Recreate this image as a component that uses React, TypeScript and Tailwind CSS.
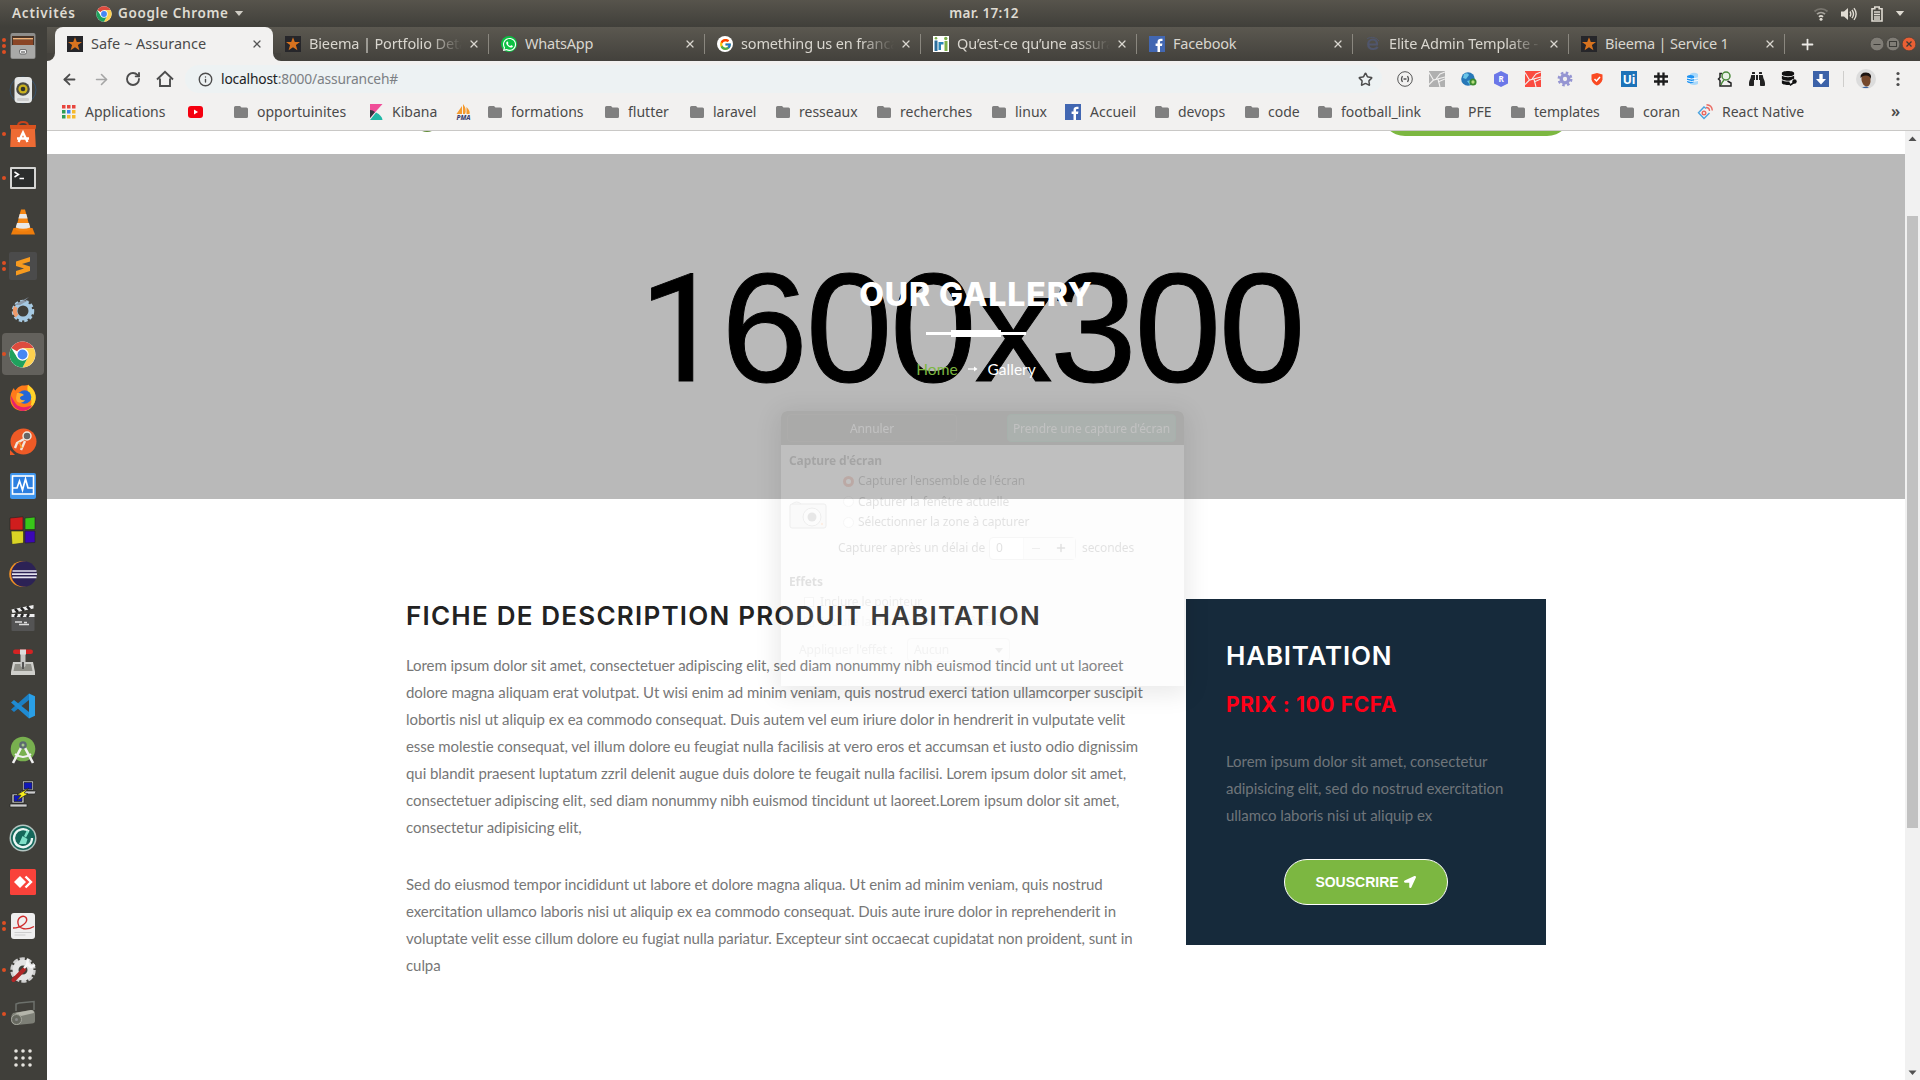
import React from "react";
import { FcGoogle } from "react-icons/fc";
import { FaWhatsapp, FaLocationArrow, FaDatabase, FaBinoculars } from "react-icons/fa";
import { ArrowLeft, ArrowRight, RotateCw, Info, Star, Plus, X } from "lucide-react";

/* ---------- Shared glyphs ---------- */

const ChromeLogo = ({ className }: { className: string }) => (
  <svg viewBox="0 0 48 48" className={className}>
    <circle cx="24" cy="24" r="23" fill="#fff" />
    <path d="M24 24 4.1 12.5A23 23 0 0 1 43.9 12.5L44 13H24z" fill="#dd4b3e" />
    <path d="M24 13h19.9A23 23 0 0 1 24 47l9.6-17.5z" fill="#fdd04f" />
    <path d="M4.1 12.5A23 23 0 0 0 24 47l9.5-17.5H14.5z" fill="#1fa15d" />
    <circle cx="24" cy="24" r="11" fill="#fff" />
    <circle cx="24" cy="24" r="8.8" fill="#4687f4" />
  </svg>
);

const StarFav = () => (
  <svg viewBox="0 0 16 16" className="size-4">
    <rect width="16" height="16" fill="#26262a" />
    <path d="M8 1.2 9.8 6H15l-4.1 3.1 1.5 5.2L8 11.2l-4.4 3.1 1.5-5.2L1 6h5.2z" fill="#d8731f" />
  </svg>
);

const FacebookFav = () => (
  <svg viewBox="0 0 16 16" className="size-4">
    <rect width="16" height="16" fill="#4267b2" />
    <path d="M11 16V10h2l.4-2.4H11V6.2c0-.8.3-1.2 1.3-1.2h1.2V2.8c-3-.5-5 .3-5 3.1v1.7H6.6V10h1.9v6z" fill="#fff" />
  </svg>
);

const WhatsAppFav = () => (
  <span className="flex size-4 items-center justify-center rounded-full bg-[#0cc143] text-white">
    <FaWhatsapp className="size-[15px]" />
  </span>
);

const GoogleFav = () => (
  <span className="flex size-4 items-center justify-center rounded-full bg-white">
    <FcGoogle className="size-[13px]" />
  </span>
);

const HFav = () => (
  <svg viewBox="0 0 16 16" className="size-4">
    <rect width="16" height="16" fill="#fff" />
    <path d="M1.500 4.500h3V15h-3z" fill="#2d6e9c" />
    <path d="M5.500 14V6h5v2.500H8V14z" fill="#2b86b8" />
    <path d="M11.500 5h3v10h-3z" fill="#7cb04a" />
    <circle cx="3" cy="2.300" r="1.300" fill="#7cb04a" />
    <circle cx="12.800" cy="2.500" r="1.700" fill="#7cb04a" />
  </svg>
);

const EliteFav = () => (
  <svg viewBox="0 0 16 16" className="size-4" fill="none" stroke="#50566c" strokeWidth="2.200">
    <path d="M4 8.500h8c.3-3-1.500-5-4-5-3 0-4.800 2.200-4.800 4.800 0 3 2.200 4.700 5 4.700 2 0 3.500-.8 4.500-2" />
    <path d="M2 3c2-2 8-3 12 2" strokeWidth="1" />
  </svg>
);

const Folder = () => (
  <svg viewBox="0 0 14 12" className="h-3 w-3.5">
    <path d="M0 1.500Q0 0 1.500 0H6l1.500 1.500h5Q14 1.500 14 3v7.500q0 1.500-1.500 1.500h-11Q0 12 0 10.500z" fill="#808080" />
  </svg>
);

/* ---------- Top system bar ---------- */

const SystemBar = () => (
  <header className="grid h-[27px] shrink-0 grid-cols-3 items-center bg-linear-to-b from-[#57544c] to-[#403f3a] text-[13.500px] font-semibold text-[#dfdbd2]">
    <div className="flex items-center pl-3">
      <span className="w-[84px] tracking-[0.800px]">Activités</span>
      <ChromeLogo className="mr-1.5 size-4" />
      <span className="tracking-[0.650px]">Google Chrome</span>
      <svg viewBox="0 0 10 6" className="ml-[5px] h-[5px] w-2.5">
        <path d="M0 0h10L5 6z" fill="#cfccc4" />
      </svg>
    </div>
    <div className="pl-12 text-center">
      <span className="tracking-[0.300px]">mar. 17:12</span>
    </div>
    <div className="flex items-center justify-end pr-[15px]">
      <svg viewBox="0 0 16 14" className="mr-3 h-3.5 w-4" fill="none" strokeWidth="1.800">
        <path d="M1.500 4.500a9.500 9.500 0 0 1 13 0" stroke="#77746d" />
        <path d="M4 7.200a6 6 0 0 1 8 0" stroke="#a5a29b" />
        <path d="M6 9.800a3 3 0 0 1 4 0" stroke="#dfdbd2" />
        <circle cx="8" cy="12.300" r="1.500" fill="#dfdbd2" />
      </svg>
      <svg viewBox="0 0 16 14" className="mr-3.5 h-3.5 w-4" fill="none" stroke="#dfdbd2" strokeWidth="1.400">
        <path d="M0 4.500h3L7 1v12L3 9.500H0z" fill="#dfdbd2" stroke="none" />
        <path d="M9 4.500q1.600 2.500 0 5M11 2.800q3 4.200 0 8.400M13 1.200q4.300 5.800 0 11.600" />
      </svg>
      <svg viewBox="0 0 12 16" className="mr-3 h-4 w-3" fill="none" stroke="#dfdbd2">
        <path d="M1 2.800h2.800V1h4.400v1.800H11V15H1z" strokeWidth="1.600" />
        <path d="M3 6h6M3 8.500h6M3 11h6M3 13h6" strokeWidth="1.300" />
      </svg>
      <svg viewBox="0 0 10 6" className="h-[5px] w-2.5">
        <path d="M0 0h10L5 6z" fill="#dfdbd2" />
      </svg>
    </div>
  </header>
);

/* ---------- Dock ---------- */

type DockItem = { name: string; dots: number; active?: boolean; art: React.ReactNode };

const dockItems: DockItem[] = [
  {
    name: "files", dots: 3, art: (
      <g>
        <rect x="1.500" y="1" width="25" height="26" rx="2" fill="#8e8e8c" />
        <path d="M3 4h22v9H3z" fill="#4a3426" />
        <path d="M4 6h20v1.500H4z" fill="#f0b27a" /><path d="M4 8h20v5H4z" fill="#8a4526" />
        <rect x="2" y="13" width="24" height="13" rx="1.500" fill="#a9a9a7" />
        <rect x="10.500" y="17.500" width="7" height="4.500" rx="1.500" fill="#eee" stroke="#555" strokeWidth=".8" />
        <path d="M12 20h4" stroke="#444" />
      </g>
    ),
  },
  {
    name: "music", dots: 0, art: (
      <g>
        <circle cx="14" cy="14" r="13" fill="none" stroke="#35506b" strokeWidth="1" />
        <rect x="5.500" y="1" width="17.500" height="26" rx="4" fill="#e4e6e6" />
        <circle cx="14" cy="13" r="6.800" fill="#4a4b45" />
        <circle cx="14" cy="13" r="4.600" fill="#c9b11e" />
        <circle cx="14" cy="13" r="2.300" fill="#32342c" />
        <rect x="8" y="22" width="12" height="3" rx="1" fill="#ccc" />
      </g>
    ),
  },
  {
    name: "software", dots: 1, art: (
      <g>
        <path d="M9 6q0-4 5-4t5 4" fill="none" stroke="#c8431b" strokeWidth="2" />
        <path d="M1 5h26l-1 5 .8 17H1.200L2 10z" fill="#ee6b34" />
        <path d="M1 5h26l-.6 4H1.600z" fill="#d9531f" />
        <path d="m9.500 22 4.500-9.500 4.500 9.500M8 18.500h12" fill="none" stroke="#fff" strokeWidth="2.300" />
      </g>
    ),
  },
  {
    name: "terminal", dots: 1, art: (
      <g>
        <rect x="1" y="3" width="26" height="22" rx="1" fill="#d5d5d3" />
        <rect x="3" y="5" width="22" height="18" fill="#2b2d2c" />
        <path d="m5.500 8 4 2.500-4 2.500M10.500 14.500h4.500" fill="none" stroke="#fff" strokeWidth="1.500" />
      </g>
    ),
  },
  {
    name: "vlc", dots: 0, art: (
      <g>
        <path d="M4.500 20h19l2.500 6.500H2z" fill="#ee7d0c" />
        <path d="M12 1.500h4L21.500 22q-7.500 3-15 0z" fill="#f58613" />
        <path d="M10.700 6h6.600l1.300 4.500H9.400zM8 15h12l1.300 4.500q-7.300 2.500-14.600 0z" fill="#e8e8e8" />
      </g>
    ),
  },
  {
    name: "sublime", dots: 2, art: (
      <g>
        <rect x="0" y="0" width="28" height="28" rx="2" fill="#4b4b4b" />
        <path d="m7 9.500 14-4.500v4.500l-8 2.500 8 2.500v4.500L7 23.500V19l8-2.500-8-2.500z" fill="#f79a1f" />
      </g>
    ),
  },
  {
    name: "builder", dots: 0, art: (
      <g fill="none">
        <circle cx="14" cy="15" r="10" stroke="#a9cbe2" strokeWidth="2.500" strokeDasharray="3.300 2.200" />
        <circle cx="14" cy="15" r="7.500" stroke="#a5c9e3" strokeWidth="4" />
        <path d="M8 20a7.500 7.500 0 0 1-1-9" stroke="#ee9a6a" strokeWidth="4" />
        <path d="M5 9 20 1l-5 4 5-1-9 5" fill="#8d9bab" />
      </g>
    ),
  },
  { name: "chrome", dots: 1, active: true, art: null },
  {
    name: "firefox", dots: 0, art: (
      <g>
        <path d="M14 1.500c3 0 5-1 6-.8 0 2 4 3 5.500 7C29 18 23 27 14 27S0 20 1.500 12C2 8 4 5 5 4c0 1 .5 2 1.500 2.500C8 4 11 1.500 14 1.500" fill="#ff7a1a" />
        <path d="M19 1c5 3 9 9 7.500 15S20 26.500 14 27c7-2 9.500-7 8-12S17 7 19 1" fill="#ffd42a" />
        <path d="M2 12c0 8 4 14 12 15 5-.5 8-3 9-6-5 3-13 3-16-1S3 13 2 12" fill="#e6226c" />
        <circle cx="15.500" cy="13" r="6.800" fill="#2467d6" />
        <path d="M8 9c2 0 5 0 7 2-2 1-4 1.500-4 3s2 3 5 2c-2 4-9 4-9-2z" fill="#ffae2e" />
      </g>
    ),
  },
  {
    name: "postman", dots: 0, art: (
      <g>
        <circle cx="14.500" cy="13.500" r="13" fill="#ee5a26" /><path d="M1 27v-5l5 5z" fill="#ee5a26" />
        <circle cx="18" cy="8" r="4" fill="#666" stroke="#f2e6dc" strokeWidth="1.500" />
        <path d="M15 11 8 15l-2 5M16 13l-4 9" stroke="#f2e6dc" strokeWidth="2.400" fill="none" />
        <path d="m10 14 3 6" stroke="#f8a433" strokeWidth="1.500" />
      </g>
    ),
  },
  {
    name: "monitor", dots: 0, art: (
      <g>
        <rect x="1" y="1" width="26" height="26" rx="2" fill="#3f96ee" />
        <rect x="3.500" y="4" width="21" height="18" fill="#2c7fe0" stroke="#fff" strokeWidth="1.600" />
        <path d="M4 16h4l2.500-7 3 9 3-11 2.500 9h5" fill="none" stroke="#fff" strokeWidth="1.700" />
      </g>
    ),
  },
  {
    name: "blocks", dots: 0, art: (
      <g stroke="#24241f" strokeWidth=".6">
        <path d="M1 2 14 .8V14H1z" fill="#d01d1d" /><path d="m16 2 10-1v12.500H16z" fill="#38c619" />
        <path d="M2 15h12.500v12L3 28.500z" fill="#d9d425" /><path d="M16 15h10v11.500l-10 .5z" fill="#3b07b5" />
      </g>
    ),
  },
  {
    name: "eclipse", dots: 0, art: (
      <g>
        <circle cx="13" cy="14" r="12.800" fill="#f29124" /><circle cx="15" cy="14" r="12.800" fill="#2c2255" />
        <path d="M3.500 11h24M3 14.200h25M3.500 17.400h24" stroke="#e4e2ef" strokeWidth="1.700" />
      </g>
    ),
  },
  {
    name: "video", dots: 0, art: (
      <g>
        <rect x="2.500" y="11" width="23" height="16" rx="1" fill="#545454" />
        <path d="M2.500 5.500 24.500 1v3.600L3.500 9z" fill="#eee" /><path d="M2.500 10h23v3h-23z" fill="#eee" />
        <path d="m6 4.800 3 3.400M12 3.500l3 3.400M18 2.300l3 3.400" stroke="#222" strokeWidth="2.500" />
        <path d="m8 10-2 3M14 10l-2 3M20 10l-2 3" stroke="#222" strokeWidth="2.500" />
        <path d="M6 18h7M10 20.500h10M15 18.500h3" stroke="#ddd" strokeWidth="1.300" />
      </g>
    ),
  },
  {
    name: "switch", dots: 0, art: (
      <g>
        <path d="M4 14h20l2 10v3H2v-3z" fill="#cfcfcb" /><path d="M6 16h16l1.500 7h-19z" fill="#8f8f88" />
        <path d="M11.500 4h5v14q-2.500 3-5 0z" fill="#c5c6c4" /><path d="M13 14h2v7h-2z" fill="#555" />
        <rect x="4" y="1.500" width="20" height="4.500" rx="2.200" fill="#d42323" /><rect x="11" y="1.500" width="6" height="5" fill="#ddd" />
      </g>
    ),
  },
  {
    name: "vscode", dots: 0, art: (
      <g>
        <path d="m20 1.500 6 2.800v19.400l-6 2.800z" fill="#2a9fe6" />
        <path d="M20 8 5 20l-3-2.500L20 1.500z" fill="#1b7fc4" /><path d="M20 20 5 8l-3 2.500 18 16z" fill="#1f8bd3" />
      </g>
    ),
  },
  {
    name: "android-studio", dots: 0, art: (
      <g>
        <circle cx="14" cy="13" r="12.300" fill="#78b04f" />
        <path d="M13 10 4 27M15 10l9 17" stroke="#f1f1f1" strokeWidth="2.600" />
        <path d="M6 18q8 6 16 0" stroke="#f1f1f1" strokeWidth="2" fill="none" />
        <circle cx="14" cy="9" r="3.800" fill="#5c6a70" /><circle cx="14" cy="9" r="1.500" fill="#a5c88a" />
      </g>
    ),
  },
  {
    name: "putty", dots: 0, art: (
      <g stroke="#222" strokeWidth=".7">
        <path d="M13.500 1h11v9h-11zM12 11h15l-1 3H12z" fill="#ccc" /><path d="M15 2.500h8V9h-8z" fill="#1017b8" />
        <path d="M3 14h12v9H3zM1 24h17v3H1z" fill="#ccc" /><path d="M5 15.500h8v6H5z" fill="#1017b8" />
        <path d="m20 8-12 6.500 4 .8-4 5 11-6.500-4-1z" fill="#f7ee1b" />
      </g>
    ),
  },
  {
    name: "cleaner", dots: 0, art: (
      <g>
        <circle cx="14" cy="14" r="13.500" fill="#b4c6c2" /><circle cx="14" cy="14" r="12" fill="#15685b" />
        <path d="M20 7.500A9 9 0 1 0 23 14" fill="none" stroke="#eaf6f3" strokeWidth="2.300" />
        <path d="m18 6-3 6 2 1.500L20 8zM13.500 12l5 3-1.500 5h-7z" fill="#7fe0c8" />
      </g>
    ),
  },
  {
    name: "anydesk", dots: 0, art: (
      <g>
        <rect x="1" y="1" width="26" height="26" rx="1.500" fill="#f9423a" />
        <path d="m11 8 6 6-6 6-6-6z" fill="#fff" /><path d="m16.500 8.500 5.500 5.500-5.500 5.500" fill="none" stroke="#fff" strokeWidth="2.400" />
      </g>
    ),
  },
  {
    name: "document-viewer", dots: 2, art: (
      <g>
        <rect x="2" y="1" width="24" height="26" rx="3" fill="#efefef" />
        <path d="M4 16C12 16 20 10 17 5.500c-3-3-9 0-8 6s9 7 16 3" fill="none" stroke="#cf2b2b" strokeWidth="1.400" />
        <path d="M5.500 20.500h17M5.500 23h11" stroke="#cdcdcd" />
      </g>
    ),
  },
  {
    name: "settings", dots: 1, art: (
      <g>
        <circle cx="14" cy="14" r="11" fill="none" stroke="#cfcfcf" strokeWidth="3.500" strokeDasharray="5 1.900" />
        <circle cx="14" cy="14" r="7.500" fill="none" stroke="#e3e3e3" strokeWidth="6" />
        <path d="M4.500 24 15 13.500" stroke="#b02626" strokeWidth="4" strokeLinecap="round" />
        <path d="m15 12 5-5M19 3l-1 5 4 3 4-2" stroke="#f7f7f7" strokeWidth="2.400" fill="none" />
      </g>
    ),
  },
  {
    name: "scanner", dots: 1, art: (
      <g>
        <path d="M7 11V4L10 3l15-1.500V10" fill="none" stroke="#6d716c" strokeWidth="1.500" />
        <path d="M4 13 22 10q4 0 4 4v7q0 2-3 2.500L8 25q-6 0-6-6 0-4 2-6" fill="#7d7f76" />
        <path d="M6 13 22 10q3 0 3 3l-13 3z" fill="#b4b5ab" />
        <circle cx="7.500" cy="19.500" r="5" fill="#66685f" stroke="#a5a69c" /><circle cx="7.500" cy="19.500" r="1.500" fill="#888" />
      </g>
    ),
  },
  {
    name: "apps", dots: 0, art: (
      <g fill="#e6e4df">
        {[7, 14, 21].map((y) => [7, 14, 21].map((x) => <circle key={`${x}-${y}`} cx={x} cy={y} r="1.800" />))}
      </g>
    ),
  },
];

const Dock = () => (
  <nav className="-mt-[3px] flex w-[47px] shrink-0 flex-col">
    {dockItems.map((d) => (
      <div key={d.name} className="flex h-11 shrink-0 items-center">
        <div className={d.active ? "ml-0.5 flex h-[42px] w-[42px] items-center rounded bg-[#63615c]" : "ml-0.5 flex h-[42px] w-[42px] items-center"}>
          <div className="flex w-[7px] flex-col items-start gap-0.5">
            {Array.from({ length: d.dots }, (_, i) => (
              <span key={i} className="size-1 rounded-full bg-[#dd4f23]" />
            ))}
          </div>
          {d.active ? (
            <ChromeLogo className="size-[27px]" />
          ) : (
            <svg viewBox="0 0 28 28" className="size-7">{d.art}</svg>
          )}
        </div>
      </div>
    ))}
  </nav>
);

/* ---------- Tabs ---------- */

const tabs: { title: string; icon: React.ReactNode; fade?: boolean }[] = [
  { title: "Bieema | Portfolio Details", icon: <StarFav />, fade: true },
  { title: "WhatsApp", icon: <WhatsAppFav /> },
  { title: "something us en francais", icon: <GoogleFav />, fade: true },
  { title: "Qu’est-ce qu’une assurance", icon: <HFav />, fade: true },
  { title: "Facebook", icon: <FacebookFav /> },
  { title: "Elite Admin Template - The", icon: <EliteFav />, fade: true },
  { title: "Bieema | Service 1", icon: <StarFav /> },
];

const TabStrip = () => (
  <div className="flex h-[34px] shrink-0 items-end bg-linear-to-b from-[#5b5850] to-[#43413c] text-[14.500px] text-[#d9d6cf]">
    <div className="h-2 w-2 bg-[#f2f1f0]">
      <div className="h-2 w-2 rounded-br-lg bg-[#44423d]" />
    </div>
    <div className="flex h-[34px] w-[218px] items-center rounded-t-lg bg-[#f2f1f0] pl-3 text-[#4a4a4a]">
      <StarFav />
      <span className="ml-2 w-[160px] pb-px whitespace-nowrap">Safe ~ Assurance</span>
      <X className="size-3 text-[#555]" strokeWidth={2.5} />
    </div>
    <div className="h-2 w-2 bg-[#f2f1f0]">
      <div className="h-2 w-2 rounded-bl-lg bg-[#44423d]" />
    </div>
    <div className="-ml-2 flex h-[34px]">
      {tabs.map((t, i) => (
        <div key={i} className="flex w-[216px] items-center pl-3">
          {t.icon}
          <span
            className={
              t.fade
                ? "ml-2 w-[153px] overflow-hidden pb-px whitespace-nowrap tracking-[-0.150px] [mask-image:linear-gradient(to_right,black_78%,transparent)]"
                : "ml-2 w-[153px] overflow-hidden pb-px whitespace-nowrap tracking-[-0.200px]"
            }
          >
            {t.title}
          </span>
          <X className="ml-1.5 size-3" strokeWidth={2.500} />
          <span className="ml-auto h-5 w-px bg-[#8a877f]" />
        </div>
      ))}
    </div>
    <div className="flex h-[34px] flex-1 items-center">
      <Plus className="ml-3.5 size-[17px] text-[#eceae6]" strokeWidth={2.500} />
      <div className="ml-auto flex items-center pr-[3px]">
        <WindowButton kind="min" />
        <WindowButton kind="max" />
        <WindowButton kind="close" />
      </div>
    </div>
  </div>
);

const WindowButton = ({ kind }: { kind: "min" | "max" | "close" }) => (
  <svg viewBox="0 0 16 16" className="size-4">
    <circle cx="8" cy="8" r="6.800" fill={kind === "close" ? "#ea5f34" : "#807d76"} stroke="#3c3b37" strokeWidth=".5" />
    {kind === "min" && <path d="M4.500 8.500h7" stroke="#3c3b37" />}
    {kind === "max" && <rect x="4.500" y="5.500" width="7" height="5" fill="none" stroke="#3c3b37" />}
    {kind === "close" && <path d="m5.500 5.500 5 5m0-5-5 5" stroke="#3c3b37" strokeWidth="1.300" />}
  </svg>
);

/* ---------- Address bar ---------- */

const extensions: React.ReactNode[] = [
  <g fill="none" stroke="#555">
    <circle cx="8" cy="8" r="7.300" /><path d="M5.500 5Q3.500 8 5.500 11M10.500 5q2 3 0 6M6.500 8h3" strokeWidth="1.300" />
  </g>,
  <g><rect width="16" height="16" fill="#b0b0b0" /><path d="M0 1.500 4.500 9 16 6M4.500 9 0 13.500M9 8l2 8M7 8l4-5 5-2M9 11l7-3" fill="none" stroke="#f2f1f0" strokeWidth="1.100" /></g>,
  <g><circle cx="7" cy="8" r="6.800" fill="#2778b8" /><path d="M3 3q4-2 5 1L5 8 2 7zM6 10l4-1-1 5z" fill="#6ac4e8" /><circle cx="12" cy="11" r="2.600" fill="#b6dc7e" stroke="#3c8a2f" strokeWidth="1.900" /></g>,
  <g><path d="m8 0 7 3.500v9L8 16l-7-3.500v-9z" fill="#6b77e8" /><text x="8" y="11" fontSize="8" fontWeight="700" textAnchor="middle" fill="#fff">R</text></g>,
  <g><rect width="16" height="16" fill="#fb4b40" /><path d="M0 1.500 4.500 9 16 6M4.500 9 0 13.500M9 8l2 8M7 8l4-5 5-2M9 11l7-3" fill="none" stroke="#f2f1f0" strokeWidth="1.100" /></g>,
  <g fill="none" stroke="#9595d2"><circle cx="8" cy="8" r="3.800" strokeWidth="3.300" /><circle cx="8" cy="8" r="6.200" strokeWidth="2.500" strokeDasharray="2.500 2.370" /></g>,
  <g><path d="M2.500 3.500 8 2l5.500 1.500v5Q12.500 12.500 8 14.500 3.500 12.500 2.500 8.500z" fill="#fa4a22" /><path d="m5.500 8 2 2 3.500-4" fill="none" stroke="#fff" strokeWidth="1.500" /></g>,
  <g><rect width="16" height="16" fill="#1d72b8" /><text x="8" y="12.500" fontSize="12" fontWeight="700" textAnchor="middle" fill="#fff">Ui</text></g>,
  <path d="M5.500 1.500v13M10.500 1.500v13M1 5.500h14M1 10.500h14" stroke="#1c1c1c" strokeWidth="2.300" fill="none" />,
  <g><path d="M5 3q4-2.500 8 0v10q-4 2-8 0z" fill="#a9d8fa" /><path d="M2 5q3.500-2 7 0v6q-3.500 2.500-7 0z" fill="#1f93f2" /><path d="M2 7q3.500 2 11 0M2 9.500q3.500 2 11 0" stroke="#fff" fill="none" /></g>,
  <g fill="none" stroke="#222" strokeWidth="1.500"><path d="M5 2.500H3v4L1.500 8 3 9.500V15h11v-3l-3.500-2" /><circle cx="9" cy="5" r="4" stroke="#4b8a3c" fill="#e8f1e6" /><path d="M7 9q-2 2-3 5" stroke="#4b8a3c" /></g>,
  <FaBinoculars size={16} color="#222" />,
  <g><FaDatabase size={14} color="#111" /><path d="m9 12 4-3" stroke="#f2f1f0" strokeWidth="3" /><circle cx="13.500" cy="10.500" r="2.200" fill="#111" /><path d="m13 11-4 3.500" stroke="#111" strokeWidth="1.600" /></g>,
  <g><rect width="16" height="16" fill="#3c62a8" /><path d="M6.300 3h3.400v5H13l-5 5.500L3 8h3.300z" fill="#fff" /></g>,
];

const AddressBar = () => (
  <div className="flex h-9 shrink-0 items-center pl-3.5 text-[#4d4d4d]">
    <div className="flex w-[124px] items-center gap-[15px]">
      <ArrowLeft className="size-[17px]" strokeWidth={2.600} />
      <ArrowRight className="size-[17px] text-[#a5a5a5]" strokeWidth={2.300} />
      <RotateCw className="size-[16px]" strokeWidth={2.800} />
      <svg viewBox="0 0 18 18" className="size-[18px]" fill="none" stroke="#4d4d4d" strokeWidth="1.900">
        <path d="M1 9.500 9 1.800l8 7.700M4 8.500V16h10V8.500" />
      </svg>
    </div>
    <div className="flex h-7 w-[1197px] items-center rounded-full bg-[#edf2f3] pl-[13px]">
      <Info className="size-[15px]" strokeWidth={2.200} />
      <span className="ml-2 text-[13.800px] tracking-[-0.180px] text-[#7c8084]">
        <span className="text-[#202124]">localhost</span>:8000/assuranceh#
      </span>
      <Star className="mr-[9px] ml-auto size-[15px]" strokeWidth={2.400} />
    </div>
    <div className="ml-[15px] flex gap-4">
      {extensions.map((e, i) => (
        <svg key={i} viewBox="0 0 16 16" className="size-4">{e}</svg>
      ))}
    </div>
    <span className="ml-3.5 h-4 w-px bg-[#cfcecc]" />
    <svg viewBox="0 0 20 20" className="ml-3 size-5">
      <circle cx="10" cy="10" r="10" fill="#dcdcdc" />
      <path d="M6 19q4-3 7 0z" fill="#3a62a0" />
      <path d="M5.500 8q0-4 4.500-4t4.500 4v5q-1 4.500-4 4.500-4-1-5-6.500z" fill="#75482c" />
      <path d="M4.500 9Q4 3.500 10 3.500T15 10q-1-3.500-5-3.500T4.500 9" fill="#1d1512" />
    </svg>
    <svg viewBox="0 0 4 16" className="ml-5 h-4 w-1" fill="#4d4d4d">
      <circle cx="2" cy="2.500" r="1.600" /><circle cx="2" cy="8" r="1.600" /><circle cx="2" cy="13.500" r="1.600" />
    </svg>
  </div>
);

/* ---------- Bookmarks ---------- */

const AppsGrid = () => (
  <svg viewBox="0 0 14 14" className="size-3.5">
    {["#e8453c", "#e8453c", "#e8453c", "#2f9e54", "#3b82f0", "#f5b92c", "#2f9e54", "#f5b92c", "#f5b92c"].map((c, i) => (
      <rect key={i} x={(i % 3) * 5} y={Math.floor(i / 3) * 5} width="3.500" height="3.500" fill={c} />
    ))}
  </svg>
);

const Youtube = () => (
  <svg viewBox="0 0 15 12" className="h-3 w-[15px]">
    <rect width="15" height="12" rx="3" fill="#f5000f" /><path d="m6 3.500 4 2.500-4 2.500z" fill="#fff" />
  </svg>
);

const Kibana = () => (
  <svg viewBox="0 0 14 16" className="h-4 w-3.5">
    <path d="M1 0h12.500L1 14z" fill="#f04e98" /><path d="M1 6q3 0 5 2L1 14z" fill="#343741" /><path d="M7 8.500q6 3 6.500 7.500H1z" fill="#20b8a6" />
  </svg>
);

const Pma = () => (
  <svg viewBox="0 0 17 16" className="h-4 w-[17px]">
    <path d="M7 10V2L1.500 10zM8 10V0q4 5 2 10zM11.500 10V3q4 4 3 7z" fill="#f59a2d" />
    <text x="8.500" y="15.500" fontSize="6.500" fontWeight="800" fontStyle="italic" textAnchor="middle" fill="#3c3f6e">PMA</text>
  </svg>
);

const ReactNativeMark = () => (
  <svg viewBox="0 0 16 16" className="size-4" fill="none" strokeWidth="1.400">
    <path d="M9 4.500 7 3 1.500 8.800 7 14.500l5.500-5.500" stroke="#4aa3df" />
    <circle cx="7" cy="9" r="1.800" stroke="#ea6a62" /><path d="M9 3.500q3.500 0 3.500 3.500M9.500.8Q15 1 15.300 6.500" stroke="#ea6a62" />
  </svg>
);

const bookmarks: { icon: React.ReactNode; label?: string; box: string }[] = [
  { icon: <AppsGrid />, label: "Applications", box: "w-[126px]" },
  { icon: <Youtube />, box: "w-[46px]" },
  { icon: <Folder />, label: "opportuinites", box: "w-[135px]" },
  { icon: <Kibana />, label: "Kibana", box: "w-[86px]" },
  { icon: <Pma />, box: "w-[33px]" },
  { icon: <Folder />, label: "formations", box: "w-[117px]" },
  { icon: <Folder />, label: "flutter", box: "w-[85px]" },
  { icon: <Folder />, label: "laravel", box: "w-[86px]" },
  { icon: <Folder />, label: "resseaux", box: "w-[101px]" },
  { icon: <Folder />, label: "recherches", box: "w-[115px]" },
  { icon: <Folder />, label: "linux", box: "w-[73px]" },
  { icon: <FacebookFav />, label: "Accueil", box: "w-[90px]" },
  { icon: <Folder />, label: "devops", box: "w-[90px]" },
  { icon: <Folder />, label: "code", box: "w-[73px]" },
  { icon: <Folder />, label: "football_link", box: "w-[127px]" },
  { icon: <Folder />, label: "PFE", box: "w-[66px]" },
  { icon: <Folder />, label: "templates", box: "w-[109px]" },
  { icon: <Folder />, label: "coran", box: "w-[77px]" },
  { icon: <ReactNativeMark />, label: "React Native", box: "w-[190px]" },
];

const BookmarksBar = () => (
  <div className="flex h-[33px] shrink-0 items-center pb-[3px] pl-[15px] text-[14px] whitespace-nowrap text-[#4a4a4a]">
    {bookmarks.map((b, i) => (
      <div key={i} className={`flex shrink-0 items-center ${b.box}`}>
        {b.icon}
        {b.label && <span className="ml-[9px] pb-0.5">{b.label}</span>}
      </div>
    ))}
    <span className="ml-1 pb-0.5 text-[16px] font-semibold">»</span>
  </div>
);

/* ---------- Web page ---------- */

const Hero = () => (
  <section className="relative h-[345px] overflow-hidden bg-[#b9b9b9]">
    <div className="pr-2.5 pt-[86px] text-center font-['Liberation_Sans',sans-serif] text-[156px] leading-[174px] tracking-[-2.400px] text-black [-webkit-text-stroke:1px_black]">
      <span className="font-[Roboto,sans-serif] text-[151px]">1</span>600x300
    </div>
    <div className="absolute inset-0 flex flex-col items-center pt-[121px] text-white">
      <h1 className="font-[Inter,sans-serif] text-[32px] leading-10 font-extrabold tracking-[0.900px]">OUR GALLERY</h1>
      <div className="mt-[15px] flex h-[7px] w-[100px] items-center justify-center">
        <span className="h-[3px] flex-1 bg-white" />
        <span className="h-[7px] w-[50px] bg-white" />
        <span className="h-[3px] flex-1 bg-white" />
      </div>
      <div className="mt-5 flex items-center text-[15.500px] leading-6">
        <span className="text-[#7cb741]">Home</span>
        <svg viewBox="0 0 10 6" className="mx-2.5 h-1.5 w-2.5" fill="none" stroke="#fff">
          <path d="M0 3h8" strokeWidth="1.200" /><path d="M6 .5 9.500 3 6 5.500z" fill="#fff" stroke="none" />
        </svg>
        <span>Gallery</span>
      </div>
    </div>
  </section>
);

const Article = () => (
  <article className="w-[780px] pt-px text-[15px] leading-[27px] tracking-[-0.065px] whitespace-nowrap text-[#777]">
    <h2 className="font-[Inter,sans-serif] text-[26px] leading-8 font-semibold tracking-[1.220px] text-[#222]">
      FICHE DE DESCRIPTION PRODUIT HABITATION
    </h2>
    <p className="mt-5">
      Lorem ipsum dolor sit amet, consectetuer adipiscing elit, sed diam nonummy nibh euismod tincid unt ut laoreet<br />
      dolore magna aliquam erat volutpat. Ut wisi enim ad minim veniam, quis nostrud exerci tation ullamcorper suscipit<br />
      lobortis nisl ut aliquip ex ea commodo consequat. Duis autem vel eum iriure dolor in hendrerit in vulputate velit<br />
      esse molestie consequat, vel illum dolore eu feugiat nulla facilisis at vero eros et accumsan et iusto odio dignissim<br />
      qui blandit praesent luptatum zzril delenit augue duis dolore te feugait nulla facilisi. Lorem ipsum dolor sit amet,<br />
      consectetuer adipiscing elit, sed diam nonummy nibh euismod tincidunt ut laoreet.Lorem ipsum dolor sit amet,<br />
      consectetur adipisicing elit,
    </p>
    <p className="mt-[30px]">
      Sed do eiusmod tempor incididunt ut labore et dolore magna aliqua. Ut enim ad minim veniam, quis nostrud<br />
      exercitation ullamco laboris nisi ut aliquip ex ea commodo consequat. Duis aute irure dolor in reprehenderit in<br />
      voluptate velit esse cillum dolore eu fugiat nulla pariatur. Excepteur sint occaecat cupidatat non proident, sunt in<br />
      culpa
    </p>
  </article>
);

const PriceCard = () => (
  <aside className="h-[346px] w-[360px] bg-[#162a3b] px-10 pt-[41px]">
    <h3 className="font-[Inter,sans-serif] text-[26px] leading-8 font-semibold tracking-[0.800px] text-white">HABITATION</h3>
    <p className="mt-[19px] font-[Inter,sans-serif] text-[21px] leading-7 font-bold tracking-[0.600px] text-[#ff0018]">PRIX : 100 FCFA</p>
    <p className="mt-[29px] text-[15px] leading-[27px] tracking-[-0.050px] whitespace-nowrap text-[#6f757a]">
      Lorem ipsum dolor sit amet, consectetur<br />
      adipisicing elit, sed do nostrud exercitation<br />
      ullamco laboris nisi ut aliquip ex
    </p>
    <button className="mx-auto mt-[30px] flex h-[46px] w-[164px] items-center justify-center gap-[5px] rounded-full border border-white bg-[#7cb741] pr-px font-['Liberation_Sans',sans-serif] text-[14px] font-bold text-white">
      SOUSCRIRE <FaLocationArrow className="size-3" />
    </button>
  </aside>
);

const Radio = ({ label, on }: { label: string; on?: boolean }) => (
  <div className="flex h-[20.500px] items-center gap-1">
    <span className={on ? "size-[11px] rounded-full border-[3.500px] border-[#d0401c] bg-white" : "size-[11px] rounded-full border border-[#bbb] bg-white"} />
    <span>{label}</span>
  </div>
);

/* Screenshot dialog fading out above the page */
const ScreenshotDialog = () => (
  <div className="absolute top-[280px] left-[734px] h-[275px] w-[403px] overflow-visible rounded-t-md bg-[#f0f0f0] font-['Noto_Sans',sans-serif] text-[12px] leading-5 tracking-[-0.100px] whitespace-nowrap text-[#111] opacity-12 shadow-[0_4px_24px_4px_rgba(0,0,0,0.7)]">
    <div className="flex h-[34px] items-center justify-between rounded-t-md bg-[#45433e] pr-2 pl-1.5 text-white">
      <span className="flex h-7 w-[170px] items-center justify-center rounded border border-[#5a5850] pt-px">Annuler</span>
      <span className="flex h-7 w-[169px] items-center justify-center rounded border border-[#2f7a56] bg-[#4a7a62] pt-px">Prendre une capture d'écran</span>
    </div>
    <div className="pt-1.5 pl-2">
      <div className="text-[12px] font-bold">Capture d'écran</div>
      <div className="flex items-center">
        <svg viewBox="0 0 38 28" className="mt-[26px] h-7 w-[54px] pr-4">
          <rect x="1" y="3" width="36" height="24" rx="2" fill="#dedede" stroke="#777" />
          <path d="M3 3q5-4 9 0" fill="none" stroke="#777" />
          <circle cx="23" cy="16" r="9" fill="#eee" stroke="#777" /><circle cx="23" cy="16" r="4.500" fill="#444" />
          <circle cx="33" cy="23" r="1.200" fill="#f08030" />
        </svg>
        <div className="h-[62px]">
          <Radio label="Capturer l'ensemble de l'écran" on />
          <Radio label="Capturer la fenêtre actuelle" />
          <Radio label="Sélectionner la zone à capturer" />
        </div>
      </div>
      <div className="mt-[3px] ml-[49px] flex h-6 items-center">
        <span className="w-[151px]">Capturer après un délai de</span>
        <span className="flex h-[23px] w-[87px] items-center rounded border border-[#bbb] bg-white pl-1.5">
          0
          <span className="ml-5 flex h-full flex-1 items-center justify-around border-l border-[#ddd] bg-[#f5f5f5]">
            <i className="h-px w-2 bg-[#777]" />
            <Plus className="size-3" strokeWidth={3} />
          </span>
        </span>
        <span className="ml-1.5">secondes</span>
      </div>
      <div className="mt-3 text-[12px] font-bold">Effets</div>
      <div className="ml-[15px] flex items-center gap-1.5 text-[#777]">
        <span className="size-2.5 border border-[#bbb] bg-white" />Inclure le pointeur
      </div>
      <div className="ml-[15px] flex items-center gap-1.5 text-[#bbb]">
        <span className="size-2.5 border border-[#ddd]" />Inclure la bordure de la fenêtre
      </div>
      <div className="mt-1.5 ml-2.5 flex items-center text-[#999]">
        <span className="w-[108px]">Appliquer l'effet :</span>
        <span className="flex h-6 w-[103px] items-center justify-between rounded border border-[#ccc] px-1.5">
          Aucun
          <svg viewBox="0 0 8 5" className="h-[5px] w-2"><path d="M0 0h8L4 5z" fill="#777" /></svg>
        </span>
      </div>
    </div>
  </div>
);

const ScrollBar = () => (
  <div className="flex w-[15px] shrink-0 flex-col items-center bg-[#f1f1f1]">
    <svg viewBox="0 0 15 15" className="size-[15px]"><path d="M3.500 10h8l-4-4.500z" fill="#505050" /></svg>
    <div className="mt-[70px] h-[612px] w-[11px] bg-[#c1c1c1]" />
    <svg viewBox="0 0 15 15" className="mt-auto size-[15px]"><path d="M3.500 5.500h8l-4 4.500z" fill="#505050" /></svg>
  </div>
);

const WebPage = () => (
  <div className="flex min-h-0 flex-1 border-t border-[#c9c8c6] bg-white">
    <main className="relative min-w-0 flex-1 overflow-hidden font-[Lato,sans-serif]">
      <div className="flex h-[23px] items-end overflow-hidden">
        <div className="mb-[22px] ml-[368px] h-6 w-6 shrink-0 rounded-full bg-[#5f8a35]" />
        <div className="mb-[18px] ml-[942px] h-12 w-[190px] shrink-0 rounded-full bg-[#7cb741]" />
      </div>
      <Hero />
      <div className="flex pt-[100px] pl-[359px]">
        <Article />
        <PriceCard />
      </div>
      <ScreenshotDialog />
    </main>
    <ScrollBar />
  </div>
);

export default function App() {
  return (
    <div className="flex h-[1080px] w-[1920px] flex-col overflow-hidden bg-[#403f3a] font-['Noto_Sans',sans-serif]">
      <SystemBar />
      <div className="flex min-h-0 flex-1">
        <Dock />
        <div className="flex min-w-0 flex-1 flex-col bg-[#f2f1f0]">
          <TabStrip />
          <AddressBar />
          <BookmarksBar />
          <WebPage />
        </div>
      </div>
    </div>
  );
}
